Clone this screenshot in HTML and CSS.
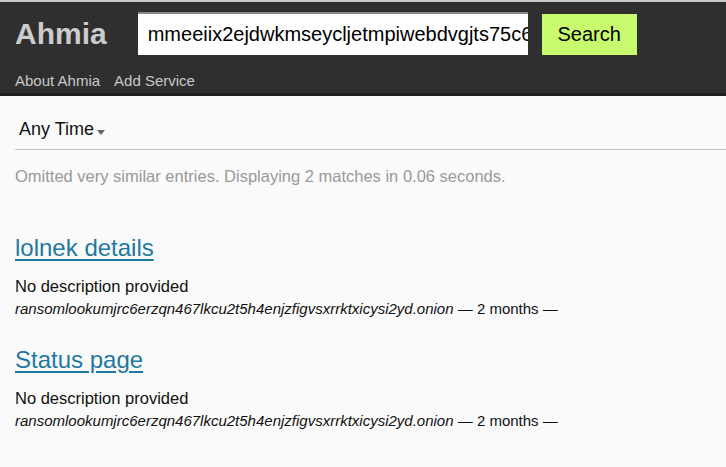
FILE: index.html
```html
<!DOCTYPE html>
<html>
<head>
<meta charset="utf-8">
<link rel="stylesheet" href="styles.css">
</head>
<body>
<header class="header">
  <div class="top-row">
    <a class="logo" href="#">Ahmia</a>
    <input class="search-box" type="text" value="mmeeiix2ejdwkmseycljetmpiwebdvgjts75c6" readonly>
    <button class="search-btn">Search</button>
  </div>
  <nav class="nav">
    <a href="#">About Ahmia</a>
    <a href="#">Add Service</a>
  </nav>
</header>
<main class="main">
  <div class="filter">
    <span class="any-time">Any Time</span><span class="caret"></span>
  </div>
  <p class="info">Omitted very similar entries. Displaying 2 matches in 0.06 seconds.</p>
  <ol class="results">
    <li class="result">
      <a class="title" href="#">lolnek details</a>
      <p class="desc">No description provided</p>
      <p class="meta"><cite>ransomlookumjrc6erzqn467lkcu2t5h4enjzfigvsxrrktxicysi2yd.onion</cite> — 2 months —</p>
    </li>
    <li class="result">
      <a class="title" href="#">Status page</a>
      <p class="desc">No description provided</p>
      <p class="meta"><cite>ransomlookumjrc6erzqn467lkcu2t5h4enjzfigvsxrrktxicysi2yd.onion</cite> — 2 months —</p>
    </li>
  </ol>
</main>
</body>
</html>
```
FILE: styles.css
```css
html, body {
  margin: 0;
  padding: 0;
}
body {
  background: #fafafa;
  font-family: "Liberation Sans", Arial, sans-serif;
  color: #111;
  overflow: hidden;
}
.header {
  background: #2f2f2f;
  border-top: 2px solid #c9c9c9;
  border-bottom: 3px solid #202020;
  padding: 10px 15px 0 15px;
  height: 81px;
  box-sizing: content-box;
}
.top-row {
  display: flex;
  align-items: flex-end;
  height: 43px;
}
.logo {
  color: #cccccc;
  font-weight: bold;
  font-size: 30px;
  line-height: 34px;
  text-decoration: none;
  margin-right: 31px;
  align-self: center;
}
.search-box {
  box-sizing: border-box;
  width: 390px;
  height: 43px;
  margin: 0;
  background: #fff;
  border: none;
  border-top: 2px solid #8a8a8a;
  padding: 0 0 0 10px;
  font-family: "Liberation Sans", Arial, sans-serif;
  font-size: 20px;
  color: #000;
  outline: none;
}
.search-btn {
  margin-left: 14px;
  width: 95px;
  height: 41px;
  background: #c8fa6e;
  border: none;
  font-family: "Liberation Sans", Arial, sans-serif;
  font-size: 20px;
  color: #000;
  padding: 0;
}
.nav {
  display: flex;
  gap: 14px;
  margin-top: 17px;
  font-size: 15px;
  line-height: 17px;
}
.nav a {
  color: #c8c8c8;
  text-decoration: none;
}
.main {
  padding: 0 0 0 15px;
}
.filter {
  margin-top: 23px;
  padding-left: 4px;
  padding-bottom: 9px;
  border-bottom: 1px solid #c6c6c6;
  font-size: 18px;
  line-height: 21px;
  display: flex;
  align-items: center;
}
.any-time {
  color: #111;
}
.caret {
  display: inline-block;
  width: 0;
  height: 0;
  border-left: 4.5px solid transparent;
  border-right: 4.5px solid transparent;
  border-top: 5px solid #666;
  margin-left: 3px;
  margin-top: 5px;
}
.info {
  margin: 18px 0 0 0;
  font-size: 16.5px;
  line-height: 17px;
  color: #999;
}
.results {
  list-style: none;
  margin: 49px 0 0 0;
  padding: 0;
}
.result {
  margin-bottom: 29px;
}
.title {
  display: block;
  font-size: 24px;
  line-height: 28px;
  color: #1f78a2;
  text-decoration: underline;
  text-underline-offset: 3px;
  width: max-content;
}
.desc {
  margin: 15px 0 0 0;
  font-size: 16.5px;
  line-height: 19px;
  color: #111;
}
.meta {
  margin: 4px 0 0 0;
  font-size: 15px;
  line-height: 17px;
  color: #111;
}
.meta cite {
  font-style: italic;
}
```
